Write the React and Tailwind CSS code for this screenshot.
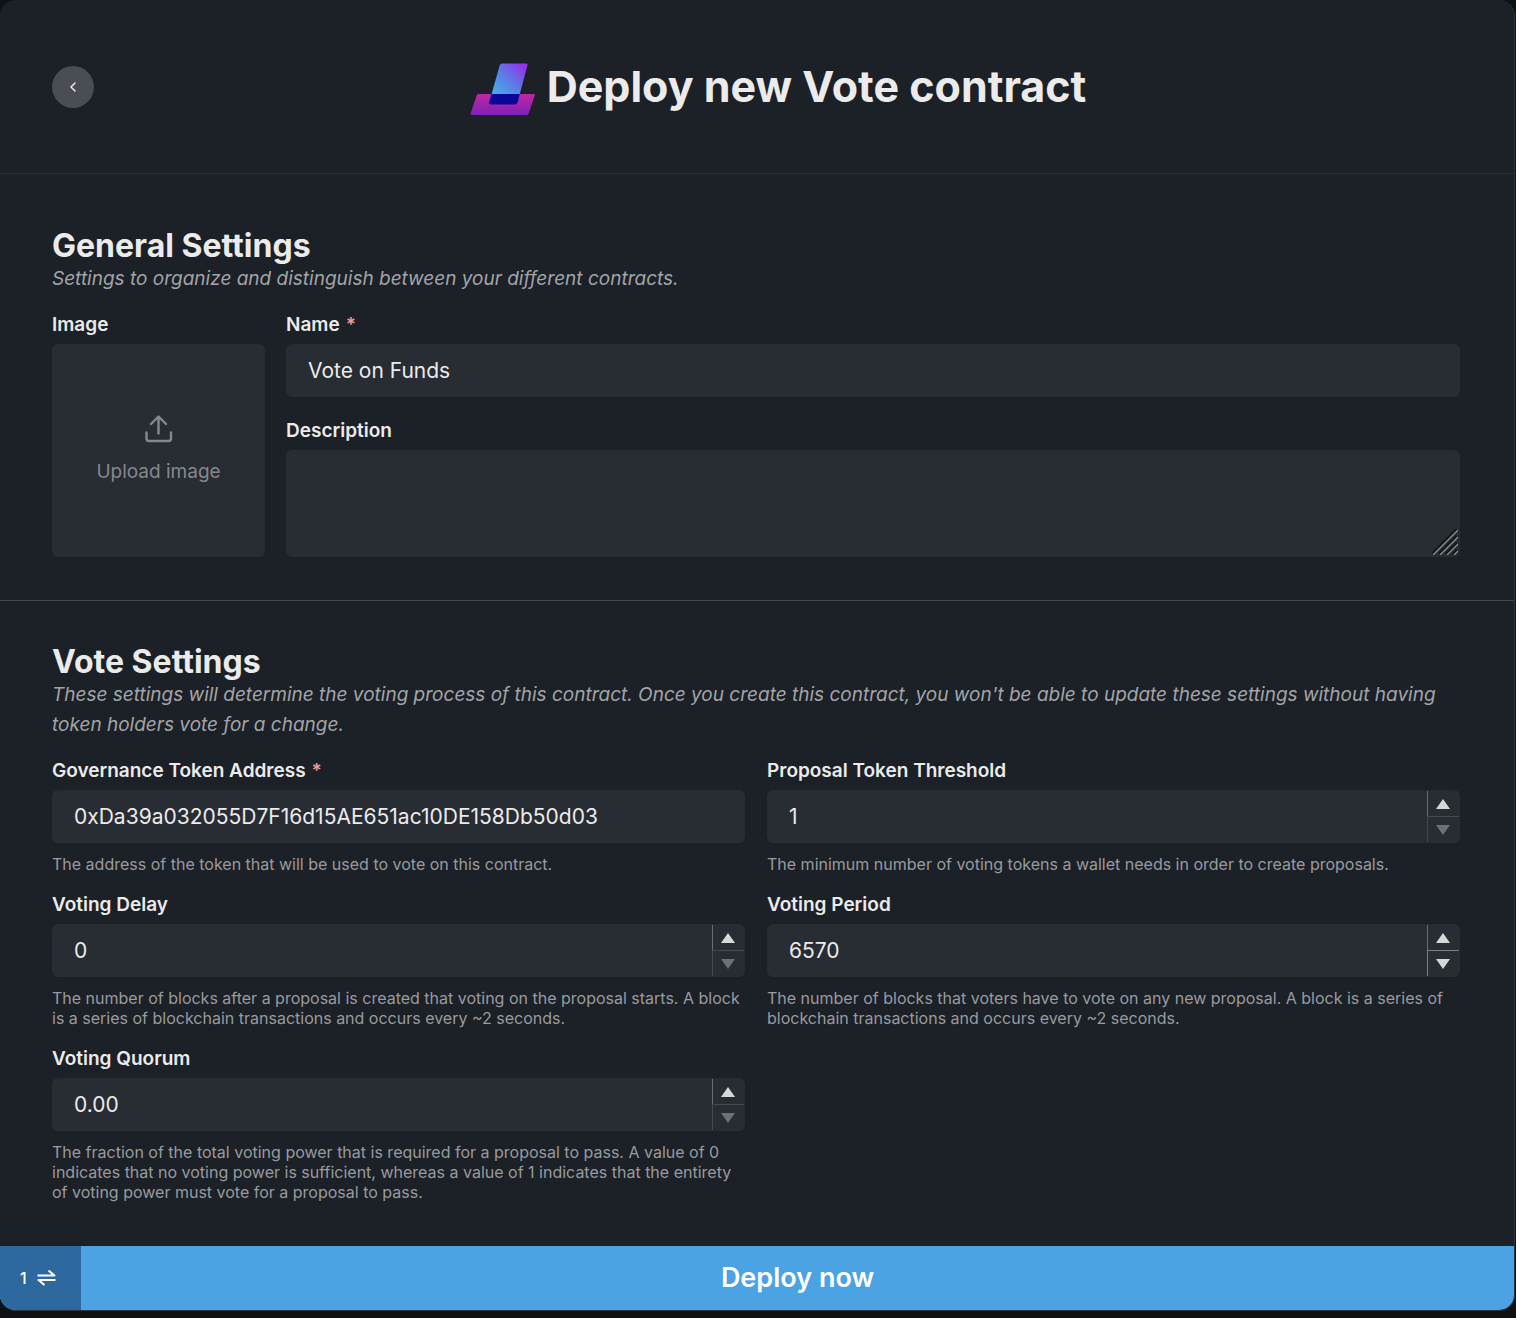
import React, { useId, useState } from "react";

function VoteLogo() {
  return (
    <svg className="mt-1 h-[52px] w-[65px] shrink-0" viewBox="0 0 65 52" fill="none" aria-hidden="true">
      <defs>
        <linearGradient id="ballot" x1="24" y1="34" x2="55" y2="4" gradientUnits="userSpaceOnUse">
          <stop offset="0" stopColor="#45b4ea" />
          <stop offset="0.5" stopColor="#5a7fe6" />
          <stop offset="1" stopColor="#9333ea" />
        </linearGradient>
        <linearGradient id="box" x1="32" y1="31" x2="32" y2="52" gradientUnits="userSpaceOnUse">
          <stop offset="0" stopColor="#c026a4" />
          <stop offset="1" stopColor="#7e22b8" />
        </linearGradient>
      </defs>
      <path d="M8.6 31H63.4Q65.4 31 64.7 32.8L58.6 50.4Q58 52 56.4 52H2Q0 52 0.7 50.2L6.6 32.6Q7.2 31 8.6 31Z" fill="url(#box)" />
      <path d="M32 0.5H56Q58 0.5 57.5 2.3L49.8 31H21.6L29.8 2.1Q30.4 0.5 32 0.5Z" fill="url(#ballot)" />
      <path d="M21.6 31H49.8L47.6 39.6Q47 41.4 45.2 41.4H20.8Q18.4 41.4 19 39.4Z" fill="#0a0698" />
    </svg>
  );
}

function UploadIcon() {
  return (
    <svg className="h-7 w-7" viewBox="0 0 28 28" fill="none" stroke="currentColor" strokeWidth="2.4" strokeLinecap="round" strokeLinejoin="round" aria-hidden="true">
      <path d="M13.5 18.5V2M6 9L13.5 1.5L21 9M1.5 17.5V23.5Q1.5 26 4 26H23.5Q26 26 26 23.5V17.5" />
    </svg>
  );
}

function Label({ htmlFor, required, children }) {
  return (
    <label htmlFor={htmlFor} className="mb-1 block text-[19px] leading-[30px] font-semibold text-[#ebebec]">
      {children}
      {required && <span className="ml-1.5 text-[#ee9a98]">*</span>}
    </label>
  );
}

function SectionHeading({ title, children }) {
  return (
    <div className="mb-4">
      <h2 className="text-[32px] leading-9 font-bold">{title}</h2>
      <p className="text-[19px] leading-[30px] text-[#a3a5a8] italic">{children}</p>
    </div>
  );
}

const inputClass =
  "block h-[53px] w-full rounded-md bg-[#282c33] px-[22px] text-[21px] text-[#ebebec] outline-none focus:ring-2 focus:ring-[#4ba3e3]";

function Field({ label, required, value, numeric, step = 1, digits = 0, canDecrease, children }) {
  const id = useId();
  const [current, setCurrent] = useState(value);
  const change = (delta) => setCurrent(Math.max(0, Number(current) + delta).toFixed(digits));
  const dim = !canDecrease;

  return (
    <div>
      <Label htmlFor={id} required={required}>{label}</Label>
      <div className="relative">
        <input
          id={id}
          type="text"
          inputMode={numeric ? "decimal" : "text"}
          required={required}
          value={current}
          onChange={(e) => setCurrent(e.target.value)}
          className={inputClass}
        />
        {numeric && (
          <div className="absolute inset-y-px right-px flex w-8 flex-col">
            <button type="button" aria-label={`Increase ${label}`} onClick={() => change(step)} className="flex flex-1 items-center justify-center border-l border-[#6b6e73] pr-0.5 text-[#d6d7d9]">
              <svg className="h-2.5 w-3.5" viewBox="0 0 14 10" fill="currentColor" aria-hidden="true"><path d="M7 0L14 10H0Z" /></svg>
            </button>
            <button
              type="button"
              aria-label={`Decrease ${label}`}
              disabled={dim}
              onClick={() => change(-step)}
              className={dim ? "flex flex-1 items-center justify-center border-t border-l border-[#45494f] pr-0.5 text-[#6d7075]" : "flex flex-1 items-center justify-center border-t border-l border-[#7b7e83] pr-0.5 text-[#d6d7d9]"}
            >
              <svg className="h-2.5 w-3.5" viewBox="0 0 14 10" fill="currentColor" aria-hidden="true"><path d="M0 0H14L7 10Z" /></svg>
            </button>
          </div>
        )}
      </div>
      <p className="mt-[11px] text-base leading-5 text-[#999b9e]">{children}</p>
    </div>
  );
}

export default function App() {
  return (
    <div className="min-h-screen bg-[#0f1215] pr-px font-['Inter',sans-serif] text-[#ebebec]">
      <form onSubmit={(e) => e.preventDefault()} className="overflow-hidden rounded-2xl border-r border-b border-[#32363c] bg-[#1c2027]">
        <header className="flex items-center border-b border-[#2b2f36] px-[52px] py-[58px]">
          <button type="button" aria-label="Back" className="flex size-[42px] shrink-0 items-center justify-center rounded-full bg-[#4a4d54]">
            <svg className="h-2.5 w-1.5" viewBox="0 0 6 10" fill="none" stroke="currentColor" strokeWidth="1.5" strokeLinecap="round" strokeLinejoin="round" aria-hidden="true"><path d="M5 1L1 5L5 9" /></svg>
          </button>
          <div className="flex flex-1 items-center justify-center gap-3">
            <VoteLogo />
            <h1 className="text-[43px] leading-[57px] font-bold">Deploy new Vote contract</h1>
          </div>
        </header>

        <section className="border-b border-[#46494f] pt-[54px] pr-[54px] pb-[43px] pl-[52px]">
          <SectionHeading title="General Settings">
            Settings to organize and distinguish between your different contracts.
          </SectionHeading>
          <div className="flex gap-[21px]">
            <div className="w-[213px] shrink-0">
              <Label htmlFor="image">Image</Label>
              <button id="image" type="button" className="flex h-[213px] w-full flex-col items-center justify-center gap-[15px] rounded-md bg-[#282c33] text-[19px] leading-7 text-[#86888c]">
                <UploadIcon />
                Upload image
              </button>
            </div>
            <div className="flex min-w-0 flex-1 flex-col gap-[19px]">
              <div>
                <Label htmlFor="name" required>Name</Label>
                <input id="name" type="text" required defaultValue="Vote on Funds" className={inputClass} />
              </div>
              <div>
                <Label htmlFor="description">Description</Label>
                <div className="relative">
                  <textarea id="description" className="block h-[107px] w-full resize-none rounded-md bg-[#282c33] px-[22px] py-2.5 text-[21px] outline-none focus:ring-2 focus:ring-[#4ba3e3]" />
                  <svg className="pointer-events-none absolute right-0.5 bottom-0.5 h-[26px] w-[26px]" viewBox="0 0 26 26" fill="none" aria-hidden="true">
                    <path d="M0 25L25 0M7 25L25 7M14 25L25 14M21 25L25 21" stroke="#131619" strokeWidth="2.6" />
                    <path d="M1 26L26 1M8 26L26 8M15 26L26 15M22 26L26 22" stroke="#8b8d91" strokeWidth="1.4" />
                  </svg>
                </div>
              </div>
            </div>
          </div>
        </section>

        <section className="pt-[43px] pr-[54px] pb-11 pl-[52px]">
          <SectionHeading title="Vote Settings">
            These settings will determine the voting process of this contract. Once you create this contract, you won't be able to update these settings without having token holders vote for a change.
          </SectionHeading>
          <div className="grid grid-cols-2 gap-x-[22px] gap-y-4">
            <Field label="Governance Token Address" required value="0xDa39a032055D7F16d15AE651ac10DE158Db50d03">
              The address of the token that will be used to vote on this contract.
            </Field>
            <Field label="Proposal Token Threshold" numeric value="1">
              The minimum number of voting tokens a wallet needs in order to create proposals.
            </Field>
            <Field label="Voting Delay" numeric value="0">
              The number of blocks after a proposal is created that voting on the proposal starts. A block is a series of blockchain transactions and occurs every ~2 seconds.
            </Field>
            <Field label="Voting Period" numeric canDecrease value="6570">
              The number of blocks that voters have to vote on any new proposal. A block is a series of blockchain transactions and occurs every ~2 seconds.
            </Field>
            <Field label="Voting Quorum" numeric step={0.01} digits={2} value="0.00">
              The fraction of the total voting power that is required for a proposal to pass. A value of 0 indicates that no voting power is sufficient, whereas a value of 1 indicates that the entirety of voting power must vote for a proposal to pass.
            </Field>
          </div>
        </section>

        <button type="submit" className="flex h-16 w-full bg-[#4ba3e3] text-white">
          <span className="flex h-full w-[81px] items-center gap-2.5 bg-[#2d689f] pl-5 text-base font-medium">
            1
            <svg className="h-[17px] w-[19px]" viewBox="0 0 19 17" fill="none" stroke="currentColor" strokeWidth="2" strokeLinejoin="round" aria-hidden="true">
              <path d="M0.5 5.5H17.5L11.5 0.5M18.5 10H1.5L7.5 15" />
            </svg>
          </span>
          <span className="flex h-full flex-1 items-center justify-center text-[27px] font-semibold">Deploy now</span>
        </button>
      </form>
    </div>
  );
}
